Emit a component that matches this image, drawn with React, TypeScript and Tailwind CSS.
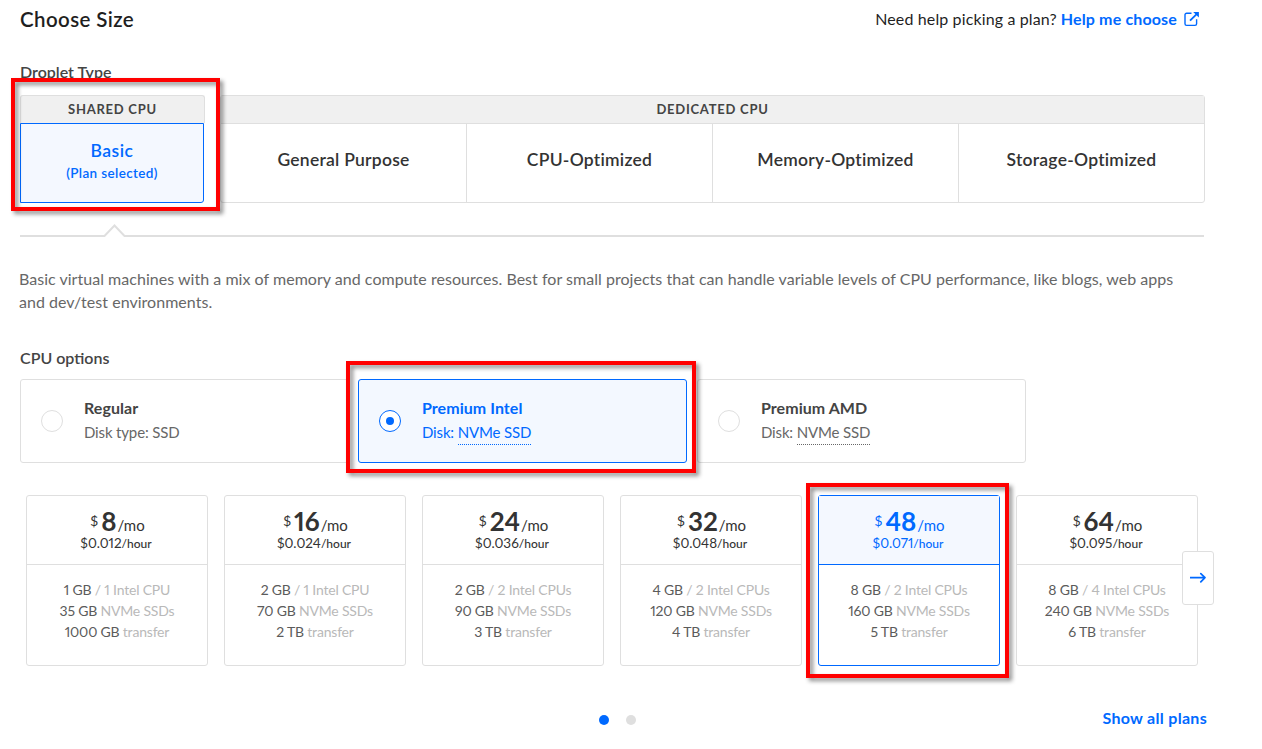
import React from "react";

type Plan = {
  price: string;
  hourly: string;
  memory: string;
  cpu: string;
  disk: string;
  transfer: string;
  selected?: boolean;
};

const plans: Plan[] = [
  { price: "8", hourly: "$0.012", memory: "1 GB", cpu: "1 Intel CPU", disk: "35 GB", transfer: "1000 GB" },
  { price: "16", hourly: "$0.024", memory: "2 GB", cpu: "1 Intel CPU", disk: "70 GB", transfer: "2 TB" },
  { price: "24", hourly: "$0.036", memory: "2 GB", cpu: "2 Intel CPUs", disk: "90 GB", transfer: "3 TB" },
  { price: "32", hourly: "$0.048", memory: "4 GB", cpu: "2 Intel CPUs", disk: "120 GB", transfer: "4 TB" },
  { price: "48", hourly: "$0.071", memory: "8 GB", cpu: "2 Intel CPUs", disk: "160 GB", transfer: "5 TB", selected: true },
  { price: "64", hourly: "$0.095", memory: "8 GB", cpu: "4 Intel CPUs", disk: "240 GB", transfer: "6 TB" },
];

const dedicated = ["General Purpose", "CPU-Optimized", "Memory-Optimized", "Storage-Optimized"];

const options = [
  { name: "Regular", label: "Disk type:", disk: "SSD", hint: false, selected: false },
  { name: "Premium Intel", label: "Disk:", disk: "NVMe SSD", hint: true, selected: true },
  { name: "Premium AMD", label: "Disk:", disk: "NVMe SSD", hint: true, selected: false },
];

function Header() {
  return (
    <header className="flex h-[38px] items-center justify-between">
      <h1 className="pt-px text-[20.5px] font-semibold tracking-[0.4px] text-[#1f1f1f]">Choose Size</h1>
      <p className="flex items-center text-[16px] text-[#1f1f1f]">
        <span className="tracking-[0.13px]">Need help picking a plan?</span>
        <a className="ml-1 font-bold tracking-[0.15px] text-[#0069ff]">Help me choose</a>
        <svg className="ml-[7px] h-4 w-4" viewBox="0 0 16 16" fill="none" stroke="#0069ff" strokeWidth="1.4">
          <path d="M7.5 2.2H2.6A1.6 1.6 0 0 0 1 3.8v9a1.6 1.6 0 0 0 1.6 1.6h8.4a1.6 1.6 0 0 0 1.6-1.6V8.2" />
          <path d="M6 9.6 13.2 2.6" strokeWidth="1.8" />
          <path d="M9.2.9H14.9v5.7Z" fill="#0069ff" stroke="none" />
        </svg>
      </p>
    </header>
  );
}

function DropletTypes() {
  return (
    <div className="flex h-[108px] w-[1185px] justify-between">
      <div className="flex w-[185px] flex-col">
        <div className="flex h-7 items-center justify-center rounded-t-[3px] border border-b-0 border-[#dfdfdf] bg-[#f0f0f0] pt-px text-[13px] font-bold tracking-[0.75px] text-[#444]">
          SHARED CPU
        </div>
        <div className="flex h-20 w-[184px] flex-col items-center rounded-br-[3px] border border-[#0069ff] bg-[#f4f8ff] pt-[15px] text-[#0069ff]">
          <span className="text-[17.5px] leading-6 font-semibold tracking-[0.5px]">Basic</span>
          <span className="text-[13.5px] leading-5 font-semibold tracking-[0.35px]">(Plan selected)</span>
        </div>
      </div>
      <div className="flex w-[985px] flex-col rounded-[3px] border border-[#dfdfdf]">
        <div className="flex h-7 items-center justify-center border-b border-[#dfdfdf] bg-[#f0f0f0] text-[13px] font-bold tracking-[0.75px] text-[#444]">
          DEDICATED CPU
        </div>
        <div className="grid flex-1 grid-cols-[246px_246px_246px_1fr]">
          {dedicated.map((name) => (
            <div
              key={name}
              className="flex justify-center border-r border-[#dfdfdf] pt-6 text-[17.5px] leading-6 font-semibold tracking-[0.25px] text-[#333] last:border-r-0"
            >
              {name}
            </div>
          ))}
        </div>
      </div>
    </div>
  );
}

function Divider() {
  return (
    <svg className="mt-5 block h-[15px] w-[1184px]" viewBox="0 0 1184 15" fill="none" stroke="#dfdfdf" strokeWidth="2">
      <path d="M0 13H84.5L94.5 2.5L104.5 13H1184" />
    </svg>
  );
}

function CpuOptions() {
  return (
    <div className="grid h-[84px] grid-cols-[338px_339px_329px]">
      {options.map((o) => (
        <div
          key={o.name}
          className={`flex w-[329px] rounded-[3px] border pl-5 ${
            o.selected ? "border-[#0069ff] bg-[#f3f8ff] text-[#0069ff]" : "border-[#dfdfdf] text-[#444]"
          }`}
        >
          <span
            className={`mt-[30px] flex h-[22px] w-[22px] items-center justify-center rounded-full border bg-white ${
              o.selected ? "border-[#0069ff]" : "border-[#dfdfdf]"
            }`}
          >
            {o.selected && <span className="h-2 w-2 rounded-full bg-[#0069ff]" />}
          </span>
          <div className="ml-[21px] pt-4">
            <div className="text-[16px] leading-6 font-bold tracking-[0.05px]">{o.name}</div>
            <div
              className={`pt-px text-[15px] leading-[23px] tracking-[-0.15px] ${o.selected ? "" : "text-[#676767]"}`}
            >
              {o.label}{" "}
              <span className={o.hint ? "inline-block h-6 border-b border-dotted border-current" : ""}>{o.disk}</span>
            </div>
          </div>
        </div>
      ))}
    </div>
  );
}

function PlanCard({ plan }: { plan: Plan }) {
  const line = plan.selected ? "border-[#0069ff]" : "border-[#dfdfdf]";
  return (
    <div className={`h-[171px] w-[182px] rounded-[3px] border proportional-nums ${line}`}>
      <div
        className={`flex h-[69px] flex-col items-center border-b pt-[10px] ${line} ${
          plan.selected ? "bg-[#f4f8ff] text-[#0069ff]" : "text-[#333]"
        }`}
      >
        <div className="flex h-7 items-baseline pl-px">
          <span className="relative -top-[5px] mr-[3px] text-[14px]">$</span>
          <span className="text-[26px] leading-[31px] font-bold">{plan.price}</span>
          <span className="ml-px text-[15px]">/mo</span>
        </div>
        <div className="pr-[2px] text-[13.5px] leading-[18px]">
          {plan.hourly}
          <span className="text-[12px] font-medium">/hour</span>
        </div>
      </div>
      <div className="pt-[14px] text-center text-[14px] leading-[21px] tracking-[-0.2px] text-[#b9b9b9]">
        <div><span className="text-[#5b5b5b]">{plan.memory}</span> / {plan.cpu}</div>
        <div><span className="text-[#5b5b5b]">{plan.disk}</span> NVMe SSDs</div>
        <div><span className="text-[#5b5b5b]">{plan.transfer}</span> transfer</div>
      </div>
    </div>
  );
}

function Highlight({ className }: { className: string }) {
  return (
    <div
      className={`pointer-events-none absolute border-4 border-[#ff0000] [filter:drop-shadow(3px_3px_2px_rgba(0,0,0,0.45))] ${className}`}
    />
  );
}

export default function App() {
  return (
    <main className="relative h-[749px] w-[1262px] overflow-hidden bg-white pl-5 font-['Lato','Open_Sans',sans-serif]">
      <div className="w-[1180px]">
        <Header />
      </div>
      <h2 className="mt-[22px] h-[35px] text-[16px] leading-6 font-semibold text-[#444]">Droplet Type</h2>
      <DropletTypes />
      <Divider />
      <p className="mt-[29px] -ml-px text-[16px] leading-[23px] tracking-[0.03px] text-[#676767]">
        Basic virtual machines with a mix of memory and compute resources. Best for small projects that can handle variable levels of CPU performance, like blogs, web apps
        <br />
        and dev/test environments.
      </p>
      <h2 className="mt-[33px] h-[33px] text-[16px] leading-6 font-semibold text-[#444]">CPU options</h2>
      <CpuOptions />
      <div className="relative mt-8 ml-[6px] flex w-[1172px] gap-4">
        {plans.map((p) => (
          <PlanCard key={p.price} plan={p} />
        ))}
        <button className="absolute top-14 left-[1156px] flex h-[54px] w-8 items-center justify-center rounded-[3px] border border-[#dfdfdf] bg-white">
          <svg className="h-4 w-4" viewBox="0 0 16 16" fill="none" stroke="#0069ff" strokeWidth="1.7" strokeLinecap="round" strokeLinejoin="round">
            <path d="M.4 7.6H15M10.8 3.6 15 7.6l-4.2 4.2" />
          </svg>
        </button>
      </div>
      <footer className="mt-10 grid h-6 w-[1187px] grid-cols-[579px_1fr_auto] items-center">
        <span />
        <div className="flex gap-[17px] pt-[2px]">
          <span className="h-[10px] w-[10px] rounded-full bg-[#0069ff]" />
          <span className="h-[10px] w-[10px] rounded-full bg-[#dfdfdf]" />
        </div>
        <a className="pb-[2px] text-[16px] font-bold tracking-[0.3px] text-[#0069ff]">Show all plans</a>
      </footer>
      <Highlight className="top-[78px] left-[11px] h-[133px] w-[209px]" />
      <Highlight className="top-[361px] left-[346px] h-[112px] w-[350px]" />
      <Highlight className="top-[483px] left-[806px] h-[195px] w-[203px]" />
    </main>
  );
}
